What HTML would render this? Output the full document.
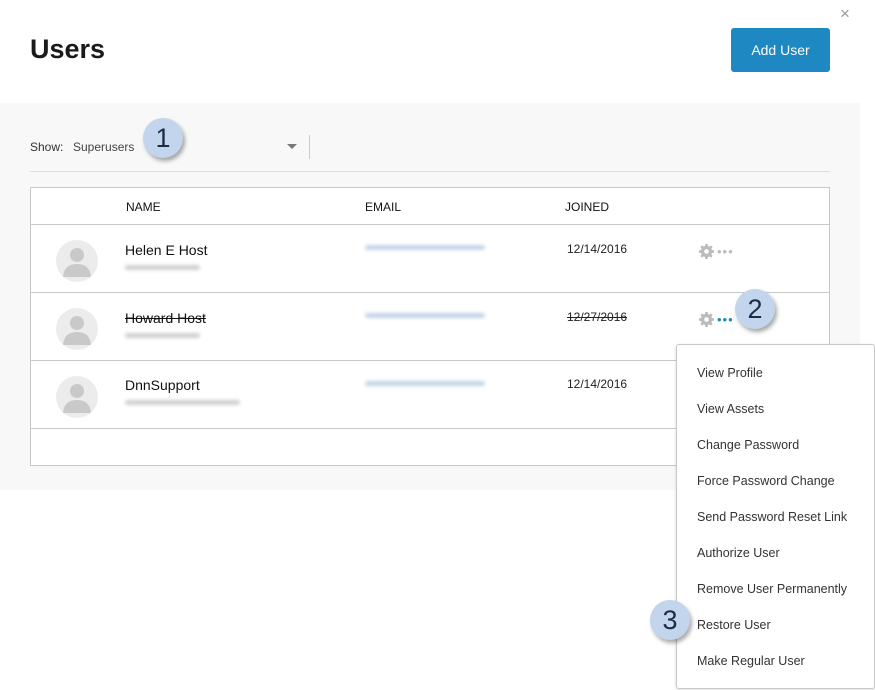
<!DOCTYPE html>
<html><head><meta charset="utf-8"><style>
*{box-sizing:border-box;margin:0;padding:0}
body{width:875px;height:690px;background:#fff;font-family:"Liberation Sans",sans-serif;position:relative;overflow:hidden;color:#222}
.abs{position:absolute}
h1{position:absolute;left:30px;top:34px;font-size:27px;font-weight:bold;color:#1a1a1a;-webkit-text-stroke:0;font-weight:600}
.btn{left:731px;top:28px;width:99px;height:44px;background:#1e88c3;border-radius:3px;color:#fff;font-size:14px;text-align:center;line-height:44px}
.panel{left:0;top:103px;width:860px;height:387px;background:#f8f8f8}
.table{left:30px;top:187px;width:800px;height:279px;background:#fff;border:1px solid #c8c8c8}
.row{position:absolute;left:0;width:798px;border-bottom:1px solid #c8c8c8}
.hd{font-size:12px;color:#111;position:absolute;top:12px}
.avatar{position:absolute;left:25px;width:42px;height:42px;border-radius:50%;background:#ececec;overflow:hidden}
.name{position:absolute;left:94px;font-size:14px;color:#111}
.blur{position:absolute;height:5px;border-radius:3px;filter:blur(1.8px);opacity:.7}
.date{position:absolute;left:536px;font-size:12px;color:#222}
.badge{width:40px;height:40px;border-radius:50%;background:#c3d5ec;box-shadow:2px 3px 4px rgba(0,0,0,.35);color:#1a2c48;font-size:27px;text-align:center;line-height:40px}
.menu{left:676px;top:344px;width:199px;height:345px;background:#fff;border:1px solid #c8c8c8;border-radius:3px;box-shadow:0 1px 3px rgba(0,0,0,.15)}
.menu div{position:absolute;left:20px;font-size:12.5px;color:#333}
.dots{position:absolute;font-size:13px;letter-spacing:1px}
</style></head><body>
<h1>Users</h1>
<div class="abs" style="left:840px;top:4px;font-size:17px;color:#999">×</div>
<div class="abs btn">Add User</div>
<div class="abs panel"></div>
<div class="abs" style="left:30px;top:140px;font-size:12px;color:#333">Show:</div>
<div class="abs" style="left:73px;top:140px;font-size:12px;color:#444">Superusers</div>
<div class="abs" style="left:287px;top:144px;width:0;height:0;border-left:5px solid transparent;border-right:5px solid transparent;border-top:5px solid #777"></div>
<div class="abs" style="left:309px;top:135px;width:1px;height:24px;background:#ccc"></div>
<div class="abs" style="left:30px;top:171px;width:800px;height:1px;background:#ddd"></div>
<div class="abs badge" style="left:143px;top:118px">1</div>
<div class="abs table">
 <div class="row" style="top:0;height:37px"><span class="hd" style="left:95px">NAME</span><span class="hd" style="left:334px">EMAIL</span><span class="hd" style="left:534px">JOINED</span></div>
 <div class="row" style="top:37px;height:68px">
  <div class="avatar" style="top:15px"><svg width="42" height="42"><circle cx="21" cy="15" r="7" fill="#c9c9c9"/><path d="M7 37 Q8 24 21 24 Q34 24 35 37 Z" fill="#c9c9c9"/></svg></div>
  <div class="name" style="top:17px">Helen E Host</div>
  <div class="blur" style="left:94px;top:40px;width:75px;background:#bbb"></div>
  <div class="blur" style="left:334px;top:20px;width:120px;background:#a9c2de"></div>
  <div class="date" style="top:17px">12/14/2016</div>
  <svg class="abs" style="left:668px;top:19px" width="15" height="15" viewBox="0 0 16 16"><path fill="#bbb" d="M6.8 0h2.4l.4 2.2 1.4.6 1.8-1.3 1.7 1.7-1.3 1.8.6 1.4 2.2.4v2.4l-2.2.4-.6 1.4 1.3 1.8-1.7 1.7-1.8-1.3-1.4.6-.4 2.2H6.8l-.4-2.2-1.4-.6-1.8 1.3-1.7-1.7 1.3-1.8-.6-1.4L0 9.2V6.8l2.2-.4.6-1.4-1.3-1.8 1.7-1.7 1.8 1.3 1.4-.6z"/><circle cx="8" cy="8" r="2.5" fill="#fff"/></svg>
  <div class="dots" style="left:686px;top:19px;color:#bbb">•••</div>
 </div>
 <div class="row" style="top:105px;height:68px">
  <div class="avatar" style="top:15px"><svg width="42" height="42"><circle cx="21" cy="15" r="7" fill="#c9c9c9"/><path d="M7 37 Q8 24 21 24 Q34 24 35 37 Z" fill="#c9c9c9"/></svg></div>
  <div class="name" style="top:17px;text-decoration:line-through">Howard Host</div>
  <div class="blur" style="left:94px;top:40px;width:75px;background:#bbb"></div>
  <div class="blur" style="left:334px;top:20px;width:120px;background:#a9c2de"></div>
  <div class="date" style="top:17px;text-decoration:line-through">12/27/2016</div>
  <svg class="abs" style="left:668px;top:19px" width="15" height="15" viewBox="0 0 16 16"><path fill="#bbb" d="M6.8 0h2.4l.4 2.2 1.4.6 1.8-1.3 1.7 1.7-1.3 1.8.6 1.4 2.2.4v2.4l-2.2.4-.6 1.4 1.3 1.8-1.7 1.7-1.8-1.3-1.4.6-.4 2.2H6.8l-.4-2.2-1.4-.6-1.8 1.3-1.7-1.7 1.3-1.8-.6-1.4L0 9.2V6.8l2.2-.4.6-1.4-1.3-1.8 1.7-1.7 1.8 1.3 1.4-.6z"/><circle cx="8" cy="8" r="2.5" fill="#fff"/></svg>
  <div class="dots" style="left:686px;top:19px;color:#1e88c3">•••</div>
 </div>
 <div class="row" style="top:173px;height:68px">
  <div class="avatar" style="top:15px"><svg width="42" height="42"><circle cx="21" cy="15" r="7" fill="#c9c9c9"/><path d="M7 37 Q8 24 21 24 Q34 24 35 37 Z" fill="#c9c9c9"/></svg></div>
  <div class="name" style="top:16px">DnnSupport</div>
  <div class="blur" style="left:94px;top:39px;width:115px;background:#bbb"></div>
  <div class="blur" style="left:334px;top:20px;width:120px;background:#a9c2de"></div>
  <div class="date" style="top:16px">12/14/2016</div>
 </div>
</div>
<div class="abs badge" style="left:735px;top:289px">2</div>
<div class="abs menu">
 <div style="top:21px">View Profile</div>
 <div style="top:57px">View Assets</div>
 <div style="top:93px">Change Password</div>
 <div style="top:129px">Force Password Change</div>
 <div style="top:165px">Send Password Reset Link</div>
 <div style="top:201px">Authorize User</div>
 <div style="top:237px">Remove User Permanently</div>
 <div style="top:273px">Restore User</div>
 <div style="top:309px">Make Regular User</div>
</div>
<div class="abs badge" style="left:650px;top:600px">3</div>
</body></html>
